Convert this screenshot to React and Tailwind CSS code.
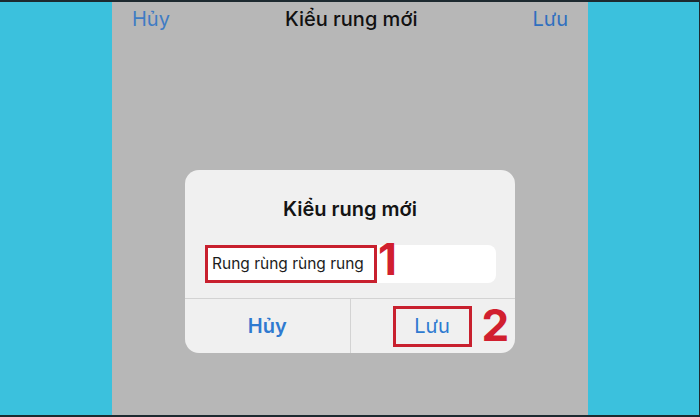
import React from "react";

const FONT = { fontFamily: "Inter, 'Noto Sans', 'DejaVu Sans', sans-serif" };

export default function App() {
  return (
    <div
      className="w-[700px] h-[417px] flex border-t-2 border-b-2 border-r border-[#1d2a30] bg-[#3bc1dd] overflow-hidden"
      style={FONT}
    >
      <div className="w-[112px] bg-[#3bc1dd]" />
      <div className="w-[476px] bg-[#b7b7b7] flex flex-col">
        {/* nav bar */}
        <div className="h-[34px] flex items-center justify-between px-[20px] text-[20px]">
          <span className="text-[#3f7cc4]">Hủy</span>
          <span className="text-[#111] font-medium">Kiểu rung mới</span>
          <span className="text-[#2f6fbf]">Lưu</span>
        </div>

        {/* alert */}
        <div className="mt-[134px] mx-auto w-[330px] h-[183px] rounded-[14px] bg-[#f0f0f0] flex flex-col">
          <div className="h-[75px] flex items-center justify-center pt-[3px] text-[20px] font-semibold text-[#141414]">
            Kiểu rung mới
          </div>
          <div className="pr-[19px] pl-[20px]">
            <div className="relative h-[38px] rounded-[8px] bg-white flex items-center pl-[7px] text-[15.5px] text-[#1c1c1c]">
              Rung rùng rùng rung
              <div className="absolute left-0 top-0 h-[38px] w-[172px] border-[3px] border-[#c8202e]" />
              <span className="absolute left-[173px] top-[-8px] text-[44px] leading-none font-bold text-[#d11f2f]">1</span>
            </div>
          </div>
          <div className="mt-[15px] flex-1 flex border-t border-[#d3d3d3]">
            <div className="flex-1 flex items-center justify-center text-[20px] font-semibold text-[#2f7ad0]">
              Hủy
            </div>
            <div className="flex-1 border-l border-[#d3d3d3] relative flex items-center">
              <div className="ml-[42px] w-[79px] h-[41px] border-[3px] border-[#c8202e] flex items-center justify-center text-[20px] text-[#2f7ad0]">
                Lưu
              </div>
              <span className="absolute left-[131px] top-[4px] text-[44px] leading-none font-bold text-[#d11f2f]">2</span>
            </div>
          </div>
        </div>
      </div>
      <div className="flex-1 bg-[#3bc1dd]" />
    </div>
  );
}
